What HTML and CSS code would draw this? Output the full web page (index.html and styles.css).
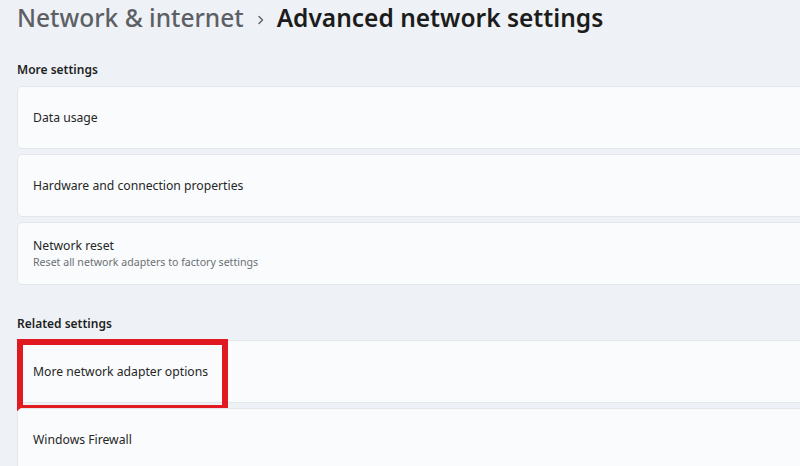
FILE: index.html
```html
<!DOCTYPE html>
<html>
<head>
<meta charset="utf-8">
<link rel="stylesheet" href="styles.css">
</head>
<body>
<div class="page">
  <h1 class="crumbs">
    <span class="crumb-parent">Network &amp; internet</span>
    <svg class="chev" width="10" height="12" viewBox="0 0 10 12"><path d="M3 2.5 L6.5 6 L3 9.5" fill="none" stroke="#5d6166" stroke-width="1.4" stroke-linecap="round" stroke-linejoin="round"/></svg>
    <span class="crumb-current">Advanced network settings</span>
  </h1>

  <h2 class="section-title first">More settings</h2>
  <div class="card"><div class="card-title">Data usage</div></div>
  <div class="card"><div class="card-title">Hardware and connection properties</div></div>
  <div class="card">
    <div class="card-text">
      <div class="card-title">Network reset</div>
      <div class="card-sub">Reset all network adapters to factory settings</div>
    </div>
  </div>

  <h2 class="section-title second">Related settings</h2>
  <div class="card highlighted">
    <div class="card-title">More network adapter options</div>
    <div class="red-box"></div>
  </div>
  <div class="card"><div class="card-title">Windows Firewall</div></div>
</div>
</body>
</html>
```

FILE: styles.css
```css
html, body {
  margin: 0;
  padding: 0;
  height: 100%;
  overflow: hidden;
}
body {
  background: #eef2f6;
  font-family: "Noto Sans", "Open Sans", sans-serif;
  color: #1f1f1f;
}
.page {
  padding-left: 17px;
}
.crumbs {
  margin: 0;
  display: flex;
  align-items: center;
  height: 36px;
  font-size: 24.5px;
  font-weight: 500;
  line-height: 36px;
  white-space: nowrap;
}
.crumb-parent {
  color: #5c6065;
  font-weight: 500;
}
.chev {
  margin: 3px 11px 0 12px;
}
.crumb-current {
  color: #1c1c1c;
  font-weight: 600;
}
.section-title {
  margin: 0;
  font-size: 12px;
  font-weight: 600;
  line-height: 20px;
  color: #1f1f1f;
}
.section-title.first {
  margin-top: 24px;
  margin-bottom: 6px;
}
.section-title.second {
  margin-top: 29px;
  margin-bottom: 6px;
}
.card {
  position: relative;
  height: 63px;
  box-sizing: border-box;
  margin-right: -20px;
  margin-bottom: 5px;
  background: #f9fbfc;
  border: 1px solid #e3e7eb;
  border-radius: 5px;
  display: flex;
  align-items: center;
  padding-left: 15px;
}
.card-title {
  font-size: 12.2px;
  line-height: 17px;
  color: #262626;
}
.card-sub {
  font-size: 10.6px;
  line-height: 15px;
  color: #6b6f74;
  margin-top: 1px;
}
.red-box {
  position: absolute;
  left: -1px;
  top: -2px;
  width: 211px;
  height: 72px;
  box-sizing: border-box;
  border: 6px solid #e11a22;
}
```
